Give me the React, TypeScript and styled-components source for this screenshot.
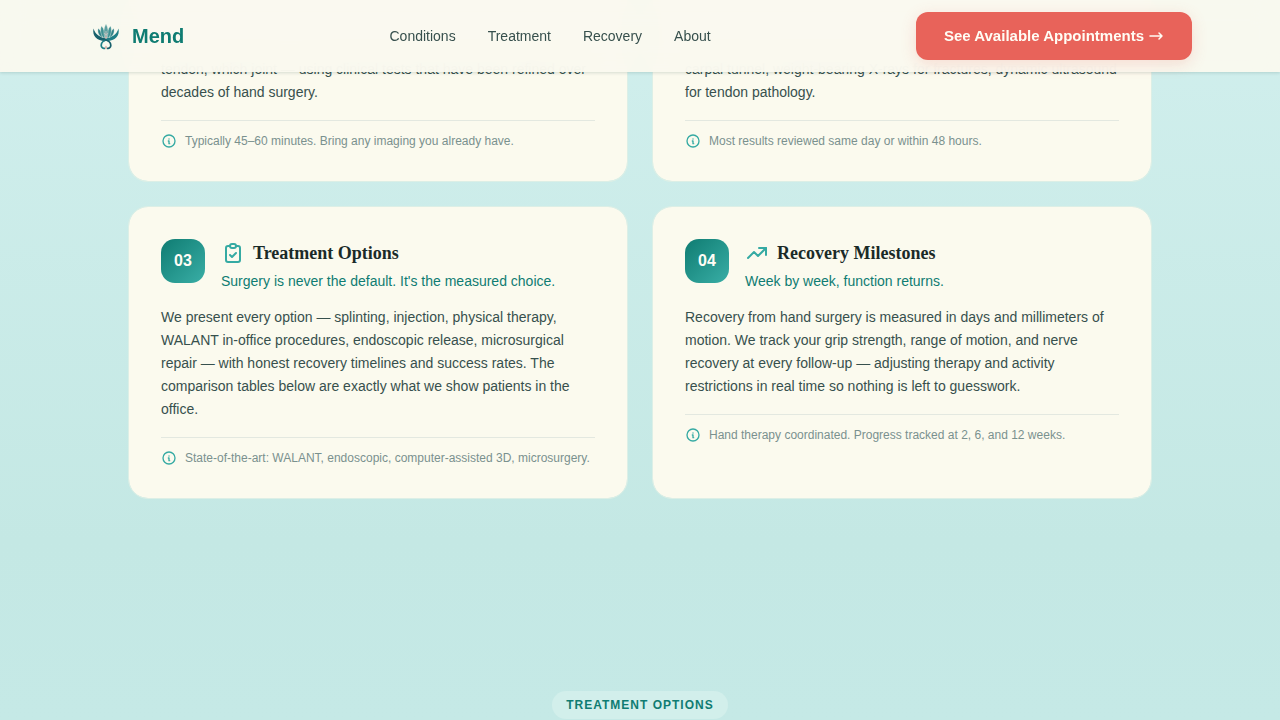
import React from 'react';
import styled, { createGlobalStyle, css } from 'styled-components';
import { TbClipboardCheck, TbInfoCircle, TbTrendingUp } from 'react-icons/tb';

const sans = '"Liberation Sans", Arial, sans-serif';
const serif = '"Liberation Serif", "Times New Roman", serif';

const GlobalStyle = createGlobalStyle`
  *, *::before, *::after { box-sizing: border-box; }
  body {
    margin: 0;
    font-family: ${sans};
    color: #37504d;
    background: #c5e8e6;
  }
  h2, h3, p { margin: 0; }
`;

const Page = styled.div`
  min-height: 100vh;
  background: linear-gradient(180deg, #d1efed 0%, #c4e8e4 75%, #c5e9e6 100%);
`;

const Header = styled.header`
  position: fixed;
  inset: 0 0 auto 0;
  z-index: 10;
  background: rgba(250, 249, 239, 0.95);
  backdrop-filter: blur(12px);
  box-shadow: 0 1px 3px rgba(16, 60, 56, 0.16);
`;

const HeaderInner = styled.div`
  display: flex;
  align-items: center;
  justify-content: space-between;
  max-width: 1152px;
  height: 72px;
  margin: 0 auto;
  padding: 0 24px;
`;

const Brand = styled.a`
  display: flex;
  align-items: center;
  gap: 8px;
  font-size: 20px;
  font-weight: 700;
  line-height: 28px;
  color: #0f7c72;
  text-decoration: none;
`;

const Nav = styled.nav`
  display: flex;
  gap: 32px;
`;

const NavLink = styled.a`
  font-size: 14px;
  line-height: 20px;
  color: #37504d;
  text-decoration: none;
`;

const BookButton = styled.button`
  display: flex;
  align-items: center;
  gap: 4px;
  height: 48px;
  padding: 0 28px;
  border: 0;
  border-radius: 12px;
  background: #e8635a;
  color: #fffdf5;
  font-family: ${sans};
  font-size: 15px;
  font-weight: 700;
  line-height: 24px;
  box-shadow: 0 4px 16px rgba(232, 99, 90, 0.2);
  cursor: pointer;
`;

const Steps = styled.section`
  display: grid;
  grid-template-columns: 1fr 1fr;
  gap: 24px;
  max-width: 1072px;
  margin: 0 auto;
  padding: 0 24px 96px;
`;

const Card = styled.article<{ $continued?: boolean }>`
  padding: 32px;
  border: 1px solid #dcefe6;
  border-radius: 20px;
  background: #fbfaee;
  background-clip: padding-box;
  ${(p) =>
    p.$continued &&
    css`
      display: flex;
      flex-direction: column;
      justify-content: flex-end;
      min-height: 182px;
      padding-top: 0;
      border-top: 0;
      border-radius: 0 0 20px 20px;
    `}
`;

const CardHead = styled.header`
  display: flex;
  gap: 16px;
  margin-bottom: 15px;
`;

const StepNumber = styled.div`
  display: flex;
  align-items: center;
  justify-content: center;
  width: 44px;
  height: 44px;
  border-radius: 14px;
  background: linear-gradient(135deg, #0f7c72, #39aea6);
  color: #fffdf5;
  font-size: 16px;
  font-weight: 700;
`;

const TitleRow = styled.div`
  display: flex;
  align-items: center;
  gap: 8px;
  margin-bottom: 4px;
  color: #35aaa3;
`;

const Title = styled.h3`
  font-family: ${serif};
  font-size: 18px;
  font-weight: 700;
  line-height: 28px;
  color: #1a2a28;
`;

const Tagline = styled.p`
  font-size: 14px;
  line-height: 20px;
  color: #0f7c72;
`;

const Body = styled.p`
  margin-bottom: 16px;
  font-size: 14px;
  line-height: 23px;
`;

const Note = styled.p`
  display: flex;
  align-items: center;
  gap: 8px;
  padding-top: 12px;
  border-top: 1px solid #e3e8e0;
  font-size: 12px;
  line-height: 16px;
  color: #7a918e;

  svg { color: #35aaa3; }
`;

const Treatments = styled.section`
  display: flex;
  justify-content: center;
  padding: 96px 24px 0;
`;

const Eyebrow = styled.h2`
  padding: 6px 14px;
  border-radius: 16px;
  background: #d2efeb;
  color: #0f7c72;
  font-size: 12px;
  font-weight: 700;
  line-height: 16px;
  letter-spacing: 1px;
  text-transform: uppercase;
`;

const Logo = () => (
  <svg width="36" height="36" viewBox="0 0 36 36" fill="none" aria-hidden="true">
    <g stroke="#e9efe7" strokeWidth="0.4">
      <path d="M13.500 19C10 17 9.300 13 10.300 10.500C12.500 12 14 15 14.500 19Z" fill="#2f8288" />
      <path d="M22.500 19C26 17 26.700 13 25.700 10.500C23.500 12 22 15 21.500 19Z" fill="#2f8288" />
      <path d="M15.500 20C12 16 12.200 11 13.500 8C16 10.500 17.300 15 17 20Z" fill="#3f9193" />
      <path d="M20.500 20C24 16 23.800 11 22.500 8C20 10.500 18.700 15 19 20Z" fill="#3f9193" />
      <path d="M18 21C15 17 15.500 10 18 6C20.500 10 21 17 18 21Z" fill="#5b9fa0" />
    </g>
    <path d="M18 13V20M16.400 15L18 17.500L19.600 15" stroke="#d8c9c5" strokeWidth="0.8" />
    <path d="M30.500 10.500C32 18.500 27 22.500 19 23.200L18 20.500C23.500 19.500 28.500 17 30.500 10.500Z" fill="#1f7f86" />
    <path d="M5.500 10.500C4 18.500 9 22.500 17 23.200L18 20.500C12.500 19.500 7.500 17 5.500 10.500Z" fill="#17606c" />
    <path d="M20 21.300C15.500 22.500 13.200 24.500 13.200 27.200C13.200 29.500 14.800 30.600 16.500 30.300" stroke="#1f7f86" strokeWidth="1.700" strokeLinecap="round" />
    <path d="M16 21.300C20.500 22.500 22.800 24.500 22.800 27.200C22.800 29.500 21.200 30.600 19.500 30.300" stroke="#17606c" strokeWidth="1.700" strokeLinecap="round" />
    <circle cx="18" cy="19.500" r="1" fill="#d9b3ab" />
    <path d="M16.600 29.500L18 27.500L19.400 29.500L18 31.500Z" fill="#d9b3ab" />
  </svg>
);

const ArrowIcon = () => (
  <svg width="16" height="16" viewBox="0 0 16 16" fill="none" stroke="currentColor" strokeWidth="1.500" strokeLinecap="round" strokeLinejoin="round" aria-hidden="true">
    <path d="M2 8H14M11 5L14 8L11 11" />
  </svg>
);

const navItems = ['Conditions', 'Treatment', 'Recovery', 'About'];

const continuedSteps = [
  {
    body: 'tendon, which joint — using clinical tests that have been refined over decades of hand surgery.',
    note: 'Typically 45–60 minutes. Bring any imaging you already have.',
  },
  {
    body: 'carpal tunnel, weight-bearing X-rays for fractures, dynamic ultrasound for tendon pathology.',
    note: 'Most results reviewed same day or within 48 hours.',
  },
];

const steps = [
  {
    number: '03',
    Icon: TbClipboardCheck,
    title: 'Treatment Options',
    tagline: "Surgery is never the default. It's the measured choice.",
    body: 'We present every option — splinting, injection, physical therapy, WALANT in-office procedures, endoscopic release, microsurgical repair — with honest recovery timelines and success rates. The comparison tables below are exactly what we show patients in the office.',
    note: 'State-of-the-art: WALANT, endoscopic, computer-assisted 3D, microsurgery.',
  },
  {
    number: '04',
    Icon: TbTrendingUp,
    title: 'Recovery Milestones',
    tagline: 'Week by week, function returns.',
    body: 'Recovery from hand surgery is measured in days and millimeters of motion. We track your grip strength, range of motion, and nerve recovery at every follow-up — adjusting therapy and activity restrictions in real time so nothing is left to guesswork.',
    note: 'Hand therapy coordinated. Progress tracked at 2, 6, and 12 weeks.',
  },
];

export default function App() {
  return (
    <Page>
      <GlobalStyle />
      <Header>
        <HeaderInner>
          <Brand href="#top">
            <Logo />
            Mend
          </Brand>
          <Nav aria-label="Main">
            {navItems.map((item) => (
              <NavLink key={item} href={`#${item.toLowerCase()}`}>
                {item}
              </NavLink>
            ))}
          </Nav>
          <BookButton type="button">
            See Available Appointments
            <ArrowIcon />
          </BookButton>
        </HeaderInner>
      </Header>
      <main>
        <Steps>
          {continuedSteps.map((step) => (
            <Card key={step.note} $continued>
              <Body>{step.body}</Body>
              <Note>
                <TbInfoCircle size={16} />
                {step.note}
              </Note>
            </Card>
          ))}
          {steps.map(({ number, Icon, title, tagline, body, note }) => (
            <Card key={number}>
              <CardHead>
                <StepNumber>{number}</StepNumber>
                <div>
                  <TitleRow>
                    <Icon size={24} />
                    <Title>{title}</Title>
                  </TitleRow>
                  <Tagline>{tagline}</Tagline>
                </div>
              </CardHead>
              <Body>{body}</Body>
              <Note>
                <TbInfoCircle size={16} />
                {note}
              </Note>
            </Card>
          ))}
        </Steps>
        <Treatments>
          <Eyebrow>Treatment options</Eyebrow>
        </Treatments>
      </main>
    </Page>
  );
}
